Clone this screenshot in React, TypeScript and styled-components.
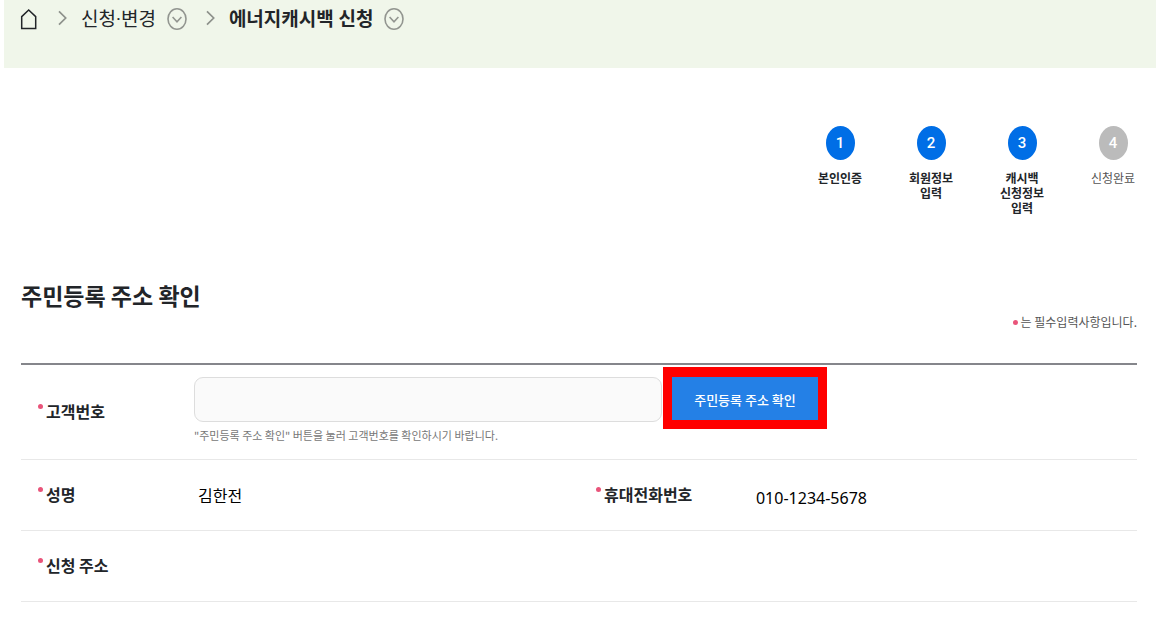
import React from "react";
import styled, { createGlobalStyle } from "styled-components";

const GlobalStyle = createGlobalStyle`
  *, *::before, *::after { box-sizing: border-box; }
  body {
    margin: 0;
    background: #fff;
    color: #222529;
    font-family: "Noto Sans CJK KR", sans-serif;
  }
`;

const Breadcrumb = styled.nav`
  display: flex;
  align-items: flex-start;
  height: 68px;
  margin-left: 4px;
  padding: 3px 15px;
  background: #f0f6ea;
`;

const Crumbs = styled.ol`
  display: flex;
  align-items: center;
  height: 30px;
  margin: 0;
  padding: 0;
  list-style: none;
`;

const Crumb = styled.li`
  display: flex;
  align-items: center;
`;

const HomeLink = styled.a`
  display: block;
  svg { display: block; }
`;

const CrumbLink = styled.a<{ $current?: boolean }>`
  display: block;
  padding-top: 3px;
  color: #222529;
  font-family: Roboto, "Noto Sans CJK KR", sans-serif;
  font-size: 19px;
  line-height: 28px;
  font-weight: ${(p) => (p.$current ? 700 : 400)};
  text-decoration: none;
  white-space: nowrap;
`;

const ToggleButton = styled.button`
  display: block;
  margin: 0 0 0 11px;
  padding: 0;
  border: 0;
  background: none;
  svg { display: block; }
`;

const Separator = styled.svg`
  display: block;
  margin: 0 13px 0 19px;
`;

const Content = styled.main`
  padding: 58px 19px 18px 21px;
`;

const Steps = styled.ol`
  display: flex;
  justify-content: flex-end;
  gap: 43px;
  min-height: 91px;
  margin: 0;
  padding: 0;
  list-style: none;
`;

const Step = styled.li<{ $pending?: boolean }>`
  display: flex;
  flex-direction: column;
  align-items: center;
  width: 48px;
  color: ${(p) => (p.$pending ? "#555" : "#222529")};
  font-size: 12px;
  line-height: 15px;
  font-weight: ${(p) => (p.$pending ? 400 : 700)};
  text-align: center;
  white-space: pre-line;
`;

const StepNumber = styled.span<{ $pending?: boolean }>`
  display: flex;
  align-items: center;
  justify-content: center;
  width: 29px;
  height: 34px;
  margin-bottom: 10px;
  border-radius: 50%;
  background: ${(p) => (p.$pending ? "#bbb" : "#006ee6")};
  color: #fff;
  font-family: Roboto, sans-serif;
  font-size: 15px;
  font-weight: 500;
`;

const SectionHead = styled.header`
  display: flex;
  justify-content: space-between;
  align-items: flex-end;
  margin-top: 60px;
  padding-bottom: 30px;
`;

const Title = styled.h1`
  margin: 0;
  padding-bottom: 20px;
  font-size: 23px;
  line-height: 36px;
  font-weight: 700;
`;

const Note = styled.p`
  display: flex;
  align-items: center;
  gap: 3px;
  margin: 0;
  color: #555;
  font-size: 12px;
  line-height: 22px;
`;

const Dot = styled.span`
  flex: none;
  width: 5px;
  height: 5px;
  border-radius: 50%;
  background: #e9547a;
`;

const FormTable = styled.table`
  width: 100%;
  table-layout: fixed;
  border-collapse: separate;
  border-spacing: 0;
  border-top: 2px solid #85868b;
`;

const LabelColumn = styled.col`
  width: 15.5%;
`;

const Row = styled.tr`
  height: 71px;
`;

const HeadCell = styled.th`
  padding: 0 0 3px 17px;
  border-bottom: 1px solid #e8e8e8;
  text-align: left;
  font-size: 16px;
  line-height: 24px;
  font-weight: 700;
`;

const FieldLabel = styled.label`
  display: flex;
  align-items: flex-start;
  gap: 3px;
  white-space: nowrap;
  ${Dot} { margin-top: 5px; }
`;

const Cell = styled.td`
  padding: 0 0 0 4px;
  border-bottom: 1px solid #e8e8e8;
  color: #000;
  font-size: 16px;
  line-height: 24px;
`;

const InputCell = styled(Cell)`
  padding: 12px 0 11px;
`;

const PhoneValue = styled.output`
  display: block;
  padding-top: 6px;
  font-family: "Noto Sans", sans-serif;
`;

const Field = styled.div`
  display: flex;
  align-items: flex-start;
  gap: 1px;
`;

const TextBox = styled.input`
  width: 468px;
  height: 45px;
  padding: 0 14px;
  border: 1px solid #ddd;
  border-radius: 9px;
  background: #fafafa;
  font: inherit;
`;

const ConfirmButton = styled.button`
  width: 164px;
  height: 62px;
  margin: -10px 0 -7px;
  padding: 2px 0 0;
  border: 9px solid #f00;
  border-top-width: 10px;
  background: #2480e6;
  color: #fff;
  font-family: inherit;
  font-size: 13px;
  line-height: 20px;
  font-weight: 500;
`;

const Help = styled.p`
  margin: 0;
  color: #777;
  font-size: 11px;
  line-height: 26px;
`;

const HomeIcon = () => (
  <svg width="20" height="24" viewBox="0 0 20 24" fill="none" stroke="#222529" strokeWidth="1.5">
    <path d="M2.7 10.6 9.7 4l7 6.6v12H2.7z" />
  </svg>
);

const Chevron = () => (
  <Separator width="10" height="16" viewBox="0 0 10 16" fill="none" stroke="#8d918b" strokeWidth="1.7" aria-hidden="true">
    <path d="M1 1.3 7.7 8 1 14.7" />
  </Separator>
);

const Toggle = ({ label }: { label: string }) => (
  <ToggleButton type="button" aria-label={label}>
    <svg width="20" height="24" viewBox="0 0 20 24" fill="none" stroke="#929590" strokeWidth="1.6">
      <ellipse cx="10" cy="13" rx="9" ry="10.2" />
      <path d="m5.6 11 4.4 4.800 4.4-4.800" />
    </svg>
  </ToggleButton>
);

const steps = [
  { label: "본인인증" },
  { label: "회원정보\n입력" },
  { label: "캐시백\n신청정보\n입력" },
  { label: "신청완료", pending: true },
];

export default function App() {
  return (
    <>
      <GlobalStyle />
      <Breadcrumb aria-label="현재 위치">
        <Crumbs>
          <Crumb>
            <HomeLink href="#home" aria-label="홈">
              <HomeIcon />
            </HomeLink>
          </Crumb>
          <Crumb>
            <Chevron />
            <CrumbLink href="#apply">신청·변경</CrumbLink>
            <Toggle label="신청·변경 메뉴" />
          </Crumb>
          <Crumb>
            <Chevron />
            <CrumbLink href="#cashback" $current aria-current="page">에너지캐시백 신청</CrumbLink>
            <Toggle label="에너지캐시백 신청 메뉴" />
          </Crumb>
        </Crumbs>
      </Breadcrumb>
      <Content>
        <Steps>
          {steps.map((step, i) => (
            <Step key={step.label} $pending={step.pending}>
              <StepNumber $pending={step.pending}>{i + 1}</StepNumber>
              {step.label}
            </Step>
          ))}
        </Steps>
        <SectionHead>
          <Title>주민등록 주소 확인</Title>
          <Note><Dot />는 필수입력사항입니다.</Note>
        </SectionHead>
        <FormTable>
          <colgroup>
            <LabelColumn />
            <col />
            <LabelColumn />
            <col />
          </colgroup>
          <tbody>
            <Row>
              <HeadCell scope="row">
                <FieldLabel htmlFor="customer-number"><Dot />고객번호</FieldLabel>
              </HeadCell>
              <InputCell colSpan={3}>
                <Field>
                  <TextBox id="customer-number" type="text" readOnly aria-describedby="customer-help" />
                  <ConfirmButton type="button">주민등록 주소 확인</ConfirmButton>
                </Field>
                <Help id="customer-help">"주민등록 주소 확인" 버튼을 눌러 고객번호를 확인하시기 바랍니다.</Help>
              </InputCell>
            </Row>
            <Row>
              <HeadCell scope="row">
                <FieldLabel htmlFor="name"><Dot />성명</FieldLabel>
              </HeadCell>
              <Cell><output id="name">김한전</output></Cell>
              <HeadCell scope="row">
                <FieldLabel htmlFor="phone"><Dot />휴대전화번호</FieldLabel>
              </HeadCell>
              <Cell><PhoneValue id="phone">010-1234-5678</PhoneValue></Cell>
            </Row>
            <Row>
              <HeadCell scope="row">
                <FieldLabel htmlFor="address"><Dot />신청 주소</FieldLabel>
              </HeadCell>
              <Cell colSpan={3}><output id="address" /></Cell>
            </Row>
          </tbody>
        </FormTable>
      </Content>
    </>
  );
}
